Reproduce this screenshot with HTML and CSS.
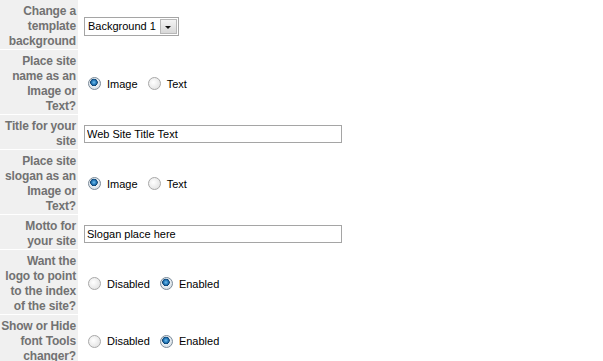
FILE: index.html
```html
<!DOCTYPE html>
<html lang="en">
<head>
  <meta charset="UTF-8">
  <title>Template Parameters</title>
  <link rel="stylesheet" href="styles.css">
</head>
<body>
  <table class="params">
    <tr>
      <td class="label">Change a template background</td>
      <td class="value">
        <div class="select"><span class="select-text">Background 1</span><span class="select-btn"></span></div>
      </td>
    </tr>
    <tr>
      <td class="label">Place site name as an Image or Text?</td>
      <td class="value">
        <label class="radio"><input type="radio" name="sitename" checked> Image</label>
        <label class="radio"><input type="radio" name="sitename"> Text</label>
      </td>
    </tr>
    <tr>
      <td class="label">Title for your site</td>
      <td class="value"><input class="text" type="text" value="Web Site Title Text"></td>
    </tr>
    <tr>
      <td class="label">Place site slogan as an Image or Text?</td>
      <td class="value">
        <label class="radio"><input type="radio" name="slogan" checked> Image</label>
        <label class="radio"><input type="radio" name="slogan"> Text</label>
      </td>
    </tr>
    <tr>
      <td class="label">Motto for your site</td>
      <td class="value"><input class="text" type="text" value="Slogan place here"></td>
    </tr>
    <tr>
      <td class="label">Want the logo to point to the index of the site?</td>
      <td class="value">
        <label class="radio"><input type="radio" name="logo"> Disabled</label>
        <label class="radio"><input type="radio" name="logo" checked> Enabled</label>
      </td>
    </tr>
    <tr>
      <td class="label">Show or Hide font Tools changer?</td>
      <td class="value">
        <label class="radio"><input type="radio" name="tools"> Disabled</label>
        <label class="radio"><input type="radio" name="tools" checked> Enabled</label>
      </td>
    </tr>
  </table>
</body>
</html>
```

FILE: styles.css
```css
body {
  margin: 0;
  background: #fff;
  font-family: "Liberation Sans", Arial, sans-serif;
}

.params {
  border-collapse: collapse;
}

.params td {
  border-bottom: 1px solid #fff;
}

.label {
  width: 76px;
  padding: 4px 2px 0 0;
  background: #f0f0f0;
  color: #727272;
  font-size: 12px;
  font-weight: bold;
  line-height: 15px;
  letter-spacing: -0.15px;
  text-align: right;
  vertical-align: middle;
  border-right: 1px solid #fff;
}

.value {
  padding: 3px 0 0 5px;
  font-size: 11px;
  color: #000;
  vertical-align: middle;
}

.select {
  display: inline-flex;
  align-items: stretch;
  height: 17px;
  border: 1px solid #a5a5a5;
  background: #fff;
  vertical-align: middle;
}

.select-text {
  padding: 0 3px 0 3px;
  line-height: 17px;
}

.select-btn {
  position: relative;
  width: 15px;
  margin: 1px;
  border: 1px solid #b8b8b8;
  background: linear-gradient(#f4f4f4, #d8d8d8);
}

.select-btn::after {
  content: '';
  position: absolute;
  left: 4px;
  top: 6px;
  border-width: 3px 3px 0 3px;
  border-style: solid;
  border-color: #111 transparent transparent transparent;
}

.text {
  width: 252px;
  height: 14px;
  margin: 0;
  padding: 1px 2px;
  border: 1px solid #a5a5a5;
  font-family: "Liberation Sans", Arial, sans-serif;
  font-size: 11px;
  color: #000;
  outline: none;
  vertical-align: middle;
}

.radio {
  display: inline-flex;
  align-items: center;
  margin-right: 3px;
  vertical-align: middle;
}

.radio input {
  appearance: none;
  -webkit-appearance: none;
  width: 13px;
  height: 13px;
  margin: 0 6px 0 4px;
  border-radius: 50%;
  border: 1px solid #a9a9a9;
  background: radial-gradient(circle at 40% 40%, #fff, #dcdcdc);
}

.radio input:checked {
  border-color: #7c8b99;
  background: radial-gradient(circle at 45% 40%, #6fc0f0 0, #1d6fb0 2.5px, #0b3d6a 3.5px, #e8eef3 4px, #c9d2da 100%);
}
```
